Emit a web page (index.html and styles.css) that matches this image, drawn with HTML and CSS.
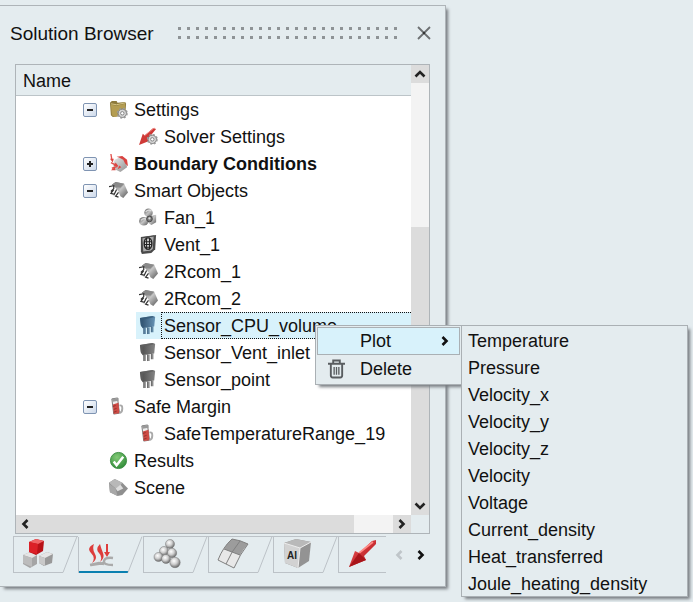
FILE: index.html
```html
<!DOCTYPE html>
<html lang="en">
<head>
<meta charset="utf-8">
<title>Solution Browser</title>
<link rel="stylesheet" href="styles.css">
</head>
<body>
<svg class="defs" aria-hidden="true">
  <defs>
    <linearGradient id="metal" x1="0" y1="0" x2="1" y2="1"><stop offset="0" stop-color="#555"/><stop offset=".5" stop-color="#c4c4c4"/><stop offset="1" stop-color="#555"/></linearGradient>
    <linearGradient id="dark" x1="0" y1="0" x2="1" y2="0"><stop offset="0" stop-color="#4a4a4a"/><stop offset="1" stop-color="#858585"/></linearGradient>
    <linearGradient id="blue" x1="0" y1="0" x2="1" y2="0"><stop offset="0" stop-color="#2c4c68"/><stop offset="1" stop-color="#6793b5"/></linearGradient>
    <linearGradient id="red" x1="0" y1="0" x2="1" y2="1"><stop offset="0" stop-color="#f0585a"/><stop offset="1" stop-color="#a80d12"/></linearGradient>
    <linearGradient id="light" x1="0" y1="0" x2="1" y2="1"><stop offset="0" stop-color="#ececec"/><stop offset="1" stop-color="#8f8f8f"/></linearGradient>
    <radialGradient id="ball" cx=".4" cy=".35" r=".65"><stop offset="0" stop-color="#fff"/><stop offset=".5" stop-color="#cfcfcf"/><stop offset="1" stop-color="#6b6b6b"/></radialGradient>
    <radialGradient id="green" cx=".4" cy=".3" r=".75"><stop offset="0" stop-color="#83ca77"/><stop offset="1" stop-color="#2e8a37"/></radialGradient>
    <symbol id="gear" viewBox="0 0 12 12">
      <circle cx="6" cy="6" r="4.4" fill="#d6d6d6" stroke="#777" stroke-width="1"/>
      <circle cx="6" cy="6" r="5" fill="none" stroke="#999" stroke-width="1.6" stroke-dasharray="2 1.93"/>
      <circle cx="6" cy="6" r="1.8" fill="#fff" stroke="#777" stroke-width=".9"/>
    </symbol>
    <symbol id="folder" viewBox="0 0 20 20">
      <path d="M1 3l2-2h5l1 2 8-1 1 2-1 12-13 2L2 16z" fill="#8d7a3c"/>
      <path d="M2 5l6 1 9-2v11l-11 3-3-2z" fill="#b49d52"/>
      <path d="M2 4l6 1 9-2" fill="none" stroke="#d9c887"/>
      <use href="#gear" x="8" y="8" width="12" height="12"/>
    </symbol>
    <symbol id="solver" viewBox="0 0 20 20">
      <path d="M0 19l4-12 2 2 9-8 3 1-9 11 1 2z" fill="#cf3a37"/>
      <path d="M6 9l10-8" stroke="#f08680" stroke-width="1" fill="none"/>
      <use href="#gear" x="8" y="7" width="12" height="12"/>
    </symbol>
    <symbol id="boundary" viewBox="0 0 20 20">
      <path d="M6 6l7-3 5 4 1 7-7 5-6-3-2-5z" fill="url(#light)"/>
      <path d="M8 3l6-1 5 4 1 7-3-3-2-4-4-2z" fill="#d94340"/>
      <path d="M2 0l1 6M2 9l6 3M3 15l6-2" stroke="#e2504c" stroke-width="1.4" fill="none"/>
      <path d="M1 5h4l-1 4zM7 9l3 4-5 0zM11 12l2 2-4 2zM2 17l4-3 1 3z" fill="#dc4542"/>
    </symbol>
    <symbol id="chip" viewBox="0 0 20 20">
      <path d="M3 4l4-3 9 2 4 9-5 6-3-2-2-5-3-4z" fill="url(#metal)"/>
      <path d="M3 4l4-3 9 2-4 4-5-1z" fill="#8a8a8a"/>
      <path d="M0 6l5-1v3l-3 3M5 9l-3 4 4 1M8 9l-3 6M10 12l-3 4 3 1" stroke="#333" stroke-width="1.3" fill="none"/>
    </symbol>
    <symbol id="fan" viewBox="0 0 20 20">
      <ellipse cx="10" cy="5" rx="4.5" ry="4.5" fill="url(#metal)"/>
      <ellipse cx="5" cy="14" rx="5" ry="4.5" fill="url(#metal)"/>
      <path d="M11 9l7-2v8l-5 3-4-3z" fill="url(#metal)"/>
      <path d="M2 13q3-3 6-1M7 4q3-3 6-1" stroke="#ddd" stroke-width="1.4" fill="none"/>
      <circle cx="11" cy="11.500" r="3" fill="#777" stroke="#444"/><circle cx="11" cy="11" r="1.200" fill="#ddd"/>
    </symbol>
    <symbol id="vent" viewBox="0 0 20 20">
      <path d="M2 2l16-2-1 15-4 4-10 1-1-3z" fill="#4b4b4b"/>
      <path d="M3 3l13-2-1 14-3 2-8 1z" fill="#aaa" stroke="#444"/>
      <ellipse cx="9.500" cy="9" rx="4" ry="6" fill="#d8d8d8" stroke="#222" stroke-width="1.500"/>
      <path d="M6 7h7M6 10h7M6 13h6M8 3v12M11 3v12" stroke="#222" stroke-width="1.100"/>
    </symbol>
    <symbol id="sensor" viewBox="0 0 20 20">
      <path d="M1 2l13-2 3 1-1 10-12 2-2-3z" fill="url(#dark)"/>
      <path d="M1 2l3 2v9l-2-3zM1 2l13-2 3 1-13 3z" fill="#606060" opacity=".8"/>
      <path d="M6 12v7M10 12v7M14 11v6" stroke="#8c8c8c" stroke-width="2.400"/>
      <path d="M5 12v7M9 12v7M13 11v6" stroke="#555" stroke-width=".8"/>
    </symbol>
    <symbol id="sensor-blue" viewBox="0 0 20 20">
      <path d="M1 2l13-2 3 1-1 10-12 2-2-3z" fill="url(#blue)"/>
      <path d="M1 2l3 2v9l-2-3zM1 2l13-2 3 1-13 3z" fill="#365b79" opacity=".8"/>
      <path d="M6 12v7M10 12v7M14 11v6" stroke="#6088a5" stroke-width="2.400"/>
      <path d="M5 12v7M9 12v7M13 11v6" stroke="#3a5b78" stroke-width=".8"/>
    </symbol>
    <symbol id="margin" viewBox="0 0 20 20">
      <path d="M3 2l6-1 2 16-6 1z" fill="#eee" stroke="#777"/>
      <path d="M3 2l7-1v3l-6 1z" fill="#999"/>
      <path d="M4 8l6-2 1 11-6 1z" fill="#ce4b45"/>
      <path d="M4 10l3-1M5 13l3-1M5 16l3-1" stroke="#842a26" stroke-width=".8"/>
      <path d="M11 9q3-1 3 3t-3 5" fill="none" stroke="#aaa" stroke-width="2"/>
    </symbol>
    <symbol id="results" viewBox="0 0 20 20">
      <circle cx="10" cy="10" r="8.500" fill="url(#green)" stroke="#3c8d42"/>
      <path d="M5 11l3 4 7-9" fill="none" stroke="#fff" stroke-width="2.600"/>
    </symbol>
    <symbol id="scene" viewBox="0 0 20 20">
      <path d="M0 5l6-4 8 4 6 6-6 7-5 1-8-4z" fill="#8f8f8f"/>
      <path d="M0 5l6-4 8 4-2 3-5 3z" fill="#b8b8b8"/>
      <path d="M0 6l7 5 2 8-8-4z" fill="#a8a8a8"/>
      <path d="M7 11l5-4 3 4-6 3z" fill="#ddd"/>
    </symbol>
    <symbol id="chev-left" viewBox="0 0 8 10"><path d="M6.500 1L2.500 5l4 4" fill="none" stroke="currentColor" stroke-width="2.600"/></symbol>
    <symbol id="chev-right" viewBox="0 0 8 10"><path d="M1.500 1l4 4-4 4" fill="none" stroke="currentColor" stroke-width="2.600"/></symbol>
    <symbol id="chev-up" viewBox="0 0 12 8"><path d="M1.500 6.500L6 2l4.500 4.500" fill="none" stroke="currentColor" stroke-width="2.600"/></symbol>
    <symbol id="chev-down" viewBox="0 0 12 8"><path d="M1.500 1.500L6 6l4.500-4.500" fill="none" stroke="currentColor" stroke-width="2.600"/></symbol>
  </defs>
</svg>
<div class="workspace">
  <section class="panel" aria-label="Solution Browser">
    <header class="panel-head">
      <h1 class="title">Solution Browser</h1>
      <span class="grip"></span>
      <button class="close" aria-label="Close"><svg width="14" height="14" viewBox="0 0 14 14"><path d="M1 1l12 12M13 1L1 13" stroke="#6d7072" stroke-width="1.800"/><circle cx="7" cy="7" r="1.200" fill="#333"/></svg></button>
    </header>

    <div class="browser">
      <div class="view">
        <div class="column-head">Name</div>
        <ul class="tree">
          <li class="row"><button class="toggle" aria-label="Collapse"></button><svg class="icon"><use href="#folder"/></svg><span class="label">Settings</span></li>
          <li class="row child"><svg class="icon"><use href="#solver"/></svg><span class="label">Solver Settings</span></li>
          <li class="row"><button class="toggle plus" aria-label="Expand"></button><svg class="icon"><use href="#boundary"/></svg><span class="label strong">Boundary Conditions</span></li>
          <li class="row"><button class="toggle" aria-label="Collapse"></button><svg class="icon"><use href="#chip"/></svg><span class="label">Smart Objects</span></li>
          <li class="row child"><svg class="icon"><use href="#fan"/></svg><span class="label">Fan_1</span></li>
          <li class="row child"><svg class="icon"><use href="#vent"/></svg><span class="label">Vent_1</span></li>
          <li class="row child"><svg class="icon"><use href="#chip"/></svg><span class="label">2Rcom_1</span></li>
          <li class="row child"><svg class="icon"><use href="#chip"/></svg><span class="label">2Rcom_2</span></li>
          <li class="row child selected"><svg class="icon"><use href="#sensor-blue"/></svg><span class="label">Sensor_CPU_volume</span></li>
          <li class="row child"><svg class="icon"><use href="#sensor"/></svg><span class="label">Sensor_Vent_inlet</span></li>
          <li class="row child"><svg class="icon"><use href="#sensor"/></svg><span class="label">Sensor_point</span></li>
          <li class="row"><button class="toggle" aria-label="Collapse"></button><svg class="icon"><use href="#margin"/></svg><span class="label">Safe Margin</span></li>
          <li class="row child"><svg class="icon"><use href="#margin"/></svg><span class="label">SafeTemperatureRange_19</span></li>
          <li class="row leaf"><svg class="icon"><use href="#results"/></svg><span class="label">Results</span></li>
          <li class="row leaf"><svg class="icon"><use href="#scene"/></svg><span class="label">Scene</span></li>
        </ul>
      </div>
      <div class="scroll vertical">
        <button class="step" aria-label="Scroll up"><svg width="12" height="8"><use href="#chev-up"/></svg></button>
        <span class="track"></span><span class="thumb"></span>
        <button class="step" aria-label="Scroll down"><svg width="12" height="8"><use href="#chev-down"/></svg></button>
      </div>
      <div class="scroll horizontal">
        <button class="step" aria-label="Scroll left"><svg width="8" height="10"><use href="#chev-left"/></svg></button>
        <span class="thumb"></span><span class="track"></span>
        <button class="step" aria-label="Scroll right"><svg width="8" height="10"><use href="#chev-right"/></svg></button>
      </div>
    </div>

    <nav class="tabbar">
      <div class="tabs">
        <button class="tab" aria-label="Geometry">
          <svg class="slant" viewBox="0 0 16 37"><path d="M1 36.500L15 .5"/></svg>
          <svg class="art" viewBox="0 0 32 32"><path d="M1 17l7-3 7 3v9l-7 4-7-4z" fill="#a5a5a5"/><path d="M1 17l7-3 7 3-5 3z" fill="#e4e4e4"/><path d="M1 17l9 3v9l-9-4z" fill="#bcbcbc"/><path d="M17 18l8-4 6 2-1 9-8 3-5-3z" fill="#999"/><path d="M17 18l8-4 6 2-8 4z" fill="#e6e6e6"/><path d="M17 18l6 2v8l-6-3z" fill="#c9c9c9"/><path d="M7 4l7-3 8 2-1 10-7 4-7-3z" fill="#b81218"/><path d="M7 4l7-3 8 2-6 3z" fill="#f06466"/><path d="M7 4l9 2-1 10-8-2z" fill="#dc2027"/></svg>
        </button>
        <button class="tab active" aria-label="Thermal">
          <svg class="slant" viewBox="0 0 16 37"><path d="M1 36.500L15 .5"/></svg>
          <svg class="art" viewBox="0 0 32 32"><path d="M7 6q-8 4-3 9t1 10q6-4 3-9t-1-10zM13 6q-5 5-1 9t1 9q5-4 3-9t-3-9z" fill="#dd3c3b"/><path d="M20 6v9" stroke="#dd3c3b" stroke-width="2"/><path d="M17 14h6l-3 5z" fill="#dd3c3b"/><path d="M3 27l9-2 5 1M26 20q-8-1-9 3t9 4M17 25L4 27" fill="none" stroke="#aaa" stroke-width="2.400"/></svg>
        </button>
        <button class="tab" aria-label="Particles">
          <svg class="slant" viewBox="0 0 16 37"><path d="M1 36.500L15 .5"/></svg>
          <svg class="art" viewBox="0 0 32 32"><g fill="url(#ball)" stroke="#777" stroke-width=".5"><circle cx="18" cy="6" r="4.500"/><circle cx="12" cy="13" r="4.500"/><circle cx="20" cy="15" r="4.700"/><circle cx="6.500" cy="19" r="4.500"/><circle cx="14" cy="21" r="4.500"/><circle cx="23" cy="24.500" r="5.200"/></g></svg>
        </button>
        <button class="tab" aria-label="Mesh">
          <svg class="slant" viewBox="0 0 16 37"><path d="M1 36.500L15 .5"/></svg>
          <svg class="art" viewBox="0 0 32 32"><path d="M15 1q8 1 16 5-8 10-14 24-8-4-16-8Q6 9 15 1z" fill="#e8e8e8"/><path d="M15 1q8 1 16 5-4 4-8 11-8-3-16-6 3-6 8-10z" fill="#9c9c9c"/><path d="M15 1q8 1 16 5-8 10-14 24-8-4-16-8Q6 9 15 1zM23 3Q14 14 9 26M7 11q8 3 16 6" fill="none" stroke="#808080"/></svg>
        </button>
        <button class="tab" aria-label="AI">
          <svg class="slant" viewBox="0 0 16 37"><path d="M1 36.500L15 .5"/></svg>
          <svg class="art" viewBox="0 0 32 32"><path d="M2 5l12-4 15 3-2 19-11 7-13-5z" fill="#939393"/><path d="M2 5l12-4 15 3-11 6z" fill="#b9b9b9"/><path d="M2 5l16 5-2 20-13-5z" fill="#d2d2d2"/><path d="M2 5l16 5 11-6M18 10l-2 20" stroke="#eee" fill="none"/><text class="cube-text" x="5" y="21">AI</text></svg>
        </button>
        <button class="tab last" aria-label="Vectors">
          <svg class="art" viewBox="0 0 32 32"><path d="M2 29l6-16 4 2L25 3l4-1v4L17 18l2 4z" fill="url(#red)"/><path d="M12 15L26 4" stroke="#ff8a86" stroke-width="1.600"/><path d="M2 29l10-14 7 7z" fill="#a9151a"/></svg>
        </button>
      </div>
      <button class="arrow off" aria-label="Previous tabs"><svg width="8" height="10"><use href="#chev-left"/></svg></button>
      <button class="arrow" aria-label="Next tabs"><svg width="8" height="10"><use href="#chev-right"/></svg></button>
    </nav>
  </section>

  <div class="menus">
    <div class="menu context" role="menu">
      <button class="item current" role="menuitem"><span class="mark"></span><span class="text">Plot</span><svg width="8" height="10"><use href="#chev-right"/></svg></button>
      <button class="item" role="menuitem"><span class="mark"><svg width="17" height="20" viewBox="0 0 18 20"><g fill="none" stroke="#595d60" stroke-width="2"><path d="M0 4.500h18M5.500 4V1h7v3M3 5v12q0 2 2 2h8q2 0 2-2V5"/><path d="M6.500 8v8M9 8v8M11.500 8v8" stroke-width="1.400"/></g></svg></span><span class="text">Delete</span></button>
    </div>
    <div class="menu sub" role="menu">
      <button class="item" role="menuitem">Temperature</button>
      <button class="item" role="menuitem">Pressure</button>
      <button class="item" role="menuitem">Velocity_x</button>
      <button class="item" role="menuitem">Velocity_y</button>
      <button class="item" role="menuitem">Velocity_z</button>
      <button class="item" role="menuitem">Velocity</button>
      <button class="item" role="menuitem">Voltage</button>
      <button class="item" role="menuitem">Current_density</button>
      <button class="item" role="menuitem">Heat_transferred</button>
      <button class="item" role="menuitem">Joule_heating_density</button>
    </div>
  </div>
</div>
</body>
</html>
```
FILE: styles.css
```css
* { box-sizing: border-box; }
body {
  margin: 0;
  background: #e4ecef;
  color: #111;
  font: 18px/27px "Liberation Sans", Arial, sans-serif;
}
button {
  margin: 0;
  padding: 0;
  border: 0;
  background: none;
  color: inherit;
  font: inherit;
}
svg { display: block; flex: none; }
.defs { position: absolute; width: 0; height: 0; }
.workspace {
  position: relative;
  display: grid;
  grid-template-columns: minmax(0, 1fr) 247px;
  align-items: start;
  min-height: 100vh;
  padding: 5px 0 15px;
}

/* Docked panel */
.panel {
  padding: 0 13px 13px;
  border: 1px solid #aeb4b8;
  border-left: 0;
  box-shadow: 3px 3px 3px -1px #777c80;
}
.panel-head {
  display: flex;
  align-items: center;
  height: 58px;
  margin: 0 -3px;
  padding: 0 2px 4px 0;
}
.title { margin: 0; font-size: 19px; font-weight: 400; }
.grip {
  flex: 1;
  height: 12px;
  margin: 0 16px 0 24px;
  background: conic-gradient(at 3px 3px, transparent 75%, #8e9396 0) 0 0 / 9px 9px;
}
.close { display: grid; place-items: center; width: 18px; height: 18px; }

/* Tree with its scroll bars */
.browser {
  display: grid;
  grid-template: auto 18px / minmax(0, 1fr) 18px;
  margin: 0 2px;
  border: 1px solid #aeb4b8;
}
.view { overflow: hidden; background: #fff; }
.column-head {
  height: 31px;
  padding: 3px 7px 0;
  border-bottom: 1px solid #bcc4c8;
  background: #e4ecef;
}
.tree { margin: 0; padding: 0 0 14px; list-style: none; }
.row {
  display: flex;
  align-items: center;
  height: 27px;
  padding-left: 67px;
  white-space: nowrap;
}
.row.leaf { padding-left: 93px; }
.row.child { padding-left: 123px; }
.toggle {
  width: 14px;
  height: 14px;
  margin-right: 12px;
  border: 1px solid #7f94b2;
  border-radius: 2px;
  background:
    linear-gradient(#222, #222) center / 6px 2px no-repeat,
    linear-gradient(135deg, #fff, #cdd9ea);
}
.toggle.plus {
  background:
    linear-gradient(#222, #222) center / 6px 2px no-repeat,
    linear-gradient(#222, #222) center / 2px 6px no-repeat,
    linear-gradient(135deg, #fff, #cdd9ea);
}
.icon { width: 19px; height: 19px; margin-right: 3px; }
.label {
  flex: 1;
  height: 27px;
  padding: 0 2px;
  border: 1px solid transparent;
  border-right: 0;
}
.strong { font-weight: 700; }
.selected { background: linear-gradient(90deg, #fff 120px, #d8f2fb 120px); }
.selected .label { border: 1px dotted #111; border-right: 0; }

.scroll { display: flex; background: #f3f3f3; }
.vertical { flex-direction: column; }
.vertical .track { flex: 144; }
.vertical .thumb { flex: 270; }
.horizontal .thumb { flex: 320; }
.horizontal .track { flex: 39; }
.thumb { background: #dcdcdc; }
.step {
  display: grid;
  place-items: center;
  flex: none;
  width: 18px;
  height: 18px;
  background: #dcdcdc;
  color: #222;
}

/* Bottom tabs */
.tabbar { display: flex; align-items: center; margin-top: 2px; }
.tabs { display: flex; flex: 1; min-width: 0; overflow: hidden; }
.tab {
  position: relative;
  flex: none;
  width: 65px;
  height: 37px;
  border-top: 1px solid #bcc2c7;
  background: linear-gradient(#bcc2c7, #bcc2c7) 0 100% / 50px 1px no-repeat;
  box-shadow: inset 1px 0 #bcc2c7;
}
.tab.active {
  border-top-color: transparent;
  background: linear-gradient(#0a80b0, #0a80b0) 1px 100% / 49px 2px no-repeat;
}
.tab.last { flex: 1 0 48px; }
.slant { position: absolute; right: 0; top: -1px; width: 16px; height: 37px; }
.slant path { fill: none; stroke: #bcc2c7; }
.art { width: 32px; height: 32px; margin: 0 0 2px 9px; }
.cube-text { font: 700 10px "Liberation Sans", Arial, sans-serif; fill: #222; }
.arrow { display: grid; place-items: center; width: 22px; height: 36px; }
.arrow.off { margin-left: 2px; color: #bfc5c9; }

/* Pop-up menus */
.menus {
  position: absolute;
  top: 325px;
  left: 315px;
  display: flex;
  align-items: flex-start;
}
.menu {
  border: 1px solid #aab0b4;
  background: #e4ecef;
  box-shadow: 3px 3px 3px -1px #777c80;
}
.menu .item { display: flex; align-items: center; width: 100%; text-align: left; }
.context { width: 146px; padding: 1px; border-right: 0; }
.context .item { height: 28px; padding: 0 10px; border: 1px solid transparent; }
.context .current { border-color: #aab0b4; background: #d8f2fb; }
.mark { width: 32px; }
.text { flex: 1; }
.sub { width: 227px; }
.sub .item { height: 27px; padding: 3px 0 0 6px; }
```
